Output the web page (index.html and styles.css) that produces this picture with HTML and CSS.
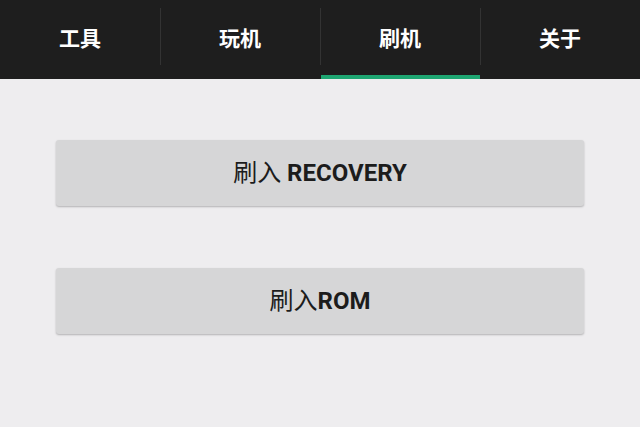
FILE: index.html
```html
<!DOCTYPE html>
<html lang="zh">
<head>
<meta charset="utf-8">
<link rel="stylesheet" href="styles.css">
</head>
<body>
<nav class="tabs">
  <div class="tab">工具</div>
  <div class="tab">玩机</div>
  <div class="tab active">刷机</div>
  <div class="tab">关于</div>
</nav>
<main class="content">
  <button class="btn"><span class="cjk">刷入</span> RECOVERY</button>
  <button class="btn"><span class="cjk">刷入</span>ROM</button>
</main>
</body>
</html>
```
FILE: styles.css
```css
html, body {
  margin: 0;
  padding: 0;
  background: #eeedef;
  width: 640px;
  height: 427px;
  overflow: hidden;
}
.tabs {
  display: flex;
  height: 79px;
  background: #1e1e1e;
}
.tab {
  flex: 1;
  display: flex;
  align-items: center;
  justify-content: center;
  color: #fff;
  font-family: Roboto, "Noto Sans CJK SC", sans-serif;
  font-weight: 700;
  font-size: 21px;
  position: relative;
  padding-bottom: 5px;
  box-sizing: border-box;
}
.tab + .tab::before {
  content: "";
  position: absolute;
  left: 0;
  top: 8px;
  height: 57px;
  width: 1px;
  background: #333;
}
.tab.active::after {
  content: "";
  position: absolute;
  left: 1px;
  right: 0;
  bottom: 0;
  height: 4px;
  background: #1ea672;
}
.content {
  display: flex;
  flex-direction: column;
  gap: 62px;
  padding: 61px 56px 0;
}
.btn {
  height: 66px;
  border: none;
  border-radius: 3px;
  background: #d6d6d7;
  box-shadow: 0 1px 2px rgba(0,0,0,0.25);
  font-family: Roboto, "Noto Sans CJK SC", sans-serif;
  font-weight: 700;
  font-size: 24px;
  color: #1c1c1c;
  padding: 0 0 6px;
}
.cjk {
  font-weight: 400;
  font-family: "Noto Sans CJK SC", sans-serif;
}
```
